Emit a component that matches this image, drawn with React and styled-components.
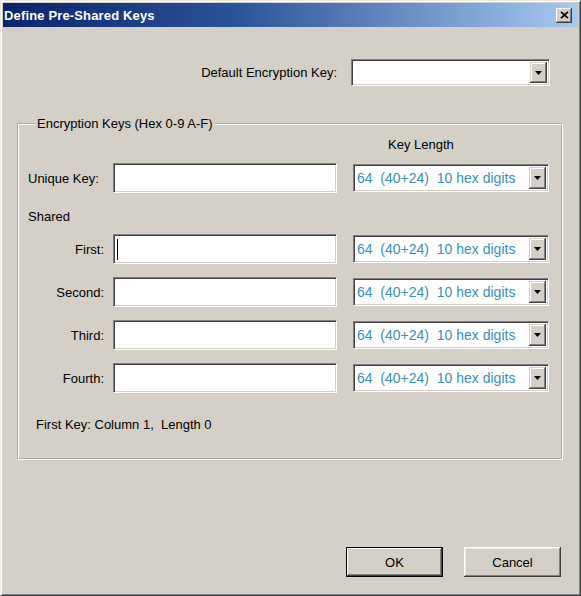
import React from 'react'
import styled, { createGlobalStyle } from 'styled-components'

const GlobalStyle = createGlobalStyle`
  html, body {
    margin: 0;
    padding: 0;
    background: #d4d0c8;
  }
  body {
    font-family: "Liberation Sans", Arial, sans-serif;
    font-size: 13px;
    color: #000;
  }
`

const Window = styled.div`
  width: 581px;
  height: 596px;
  box-sizing: border-box;
  display: flex;
  flex-direction: column;
  background: #d4d0c8;
  border: 1px solid;
  border-color: #ebe9e4 #404040 #404040 #ebe9e4;
  box-shadow: inset 1px 1px #fff, inset -1px -1px #808080;
  padding: 2px;
`

const TitleBar = styled.div`
  height: 24px;
  display: flex;
  align-items: center;
  padding: 0 6px 0 1px;
  background: linear-gradient(to right, #0a246a 0%, #2a5298 40%, #a6caf0 100%);
`

const Title = styled.span`
  color: #fff;
  font-weight: bold;
  font-size: 13px;
  letter-spacing: 0.15px;
`

const CloseButton = styled.div`
  margin-left: auto;
  width: 16px;
  height: 15px;
  display: flex;
  align-items: center;
  justify-content: center;
  background: #d4d0c8;
  box-shadow: inset -1px -1px #404040, inset 1px 1px #fff,
    inset -2px -2px #808080, inset 2px 2px #d4d0c8;
`

const Body = styled.div`
  flex: 1;
  display: flex;
  flex-direction: column;
  padding: 32px 15px 16px 14px;
`

const DefaultRow = styled.div`
  display: flex;
  justify-content: flex-end;
  align-items: center;
  gap: 14px;
  padding-right: 13px;
`

const Label = styled.span`
  width: ${p => (p.$width ? `${p.$width}px` : 'auto')};
  text-align: ${p => p.$align || 'right'};
  white-space: nowrap;
  line-height: 15px;
`

const Sunken = styled.div`
  box-sizing: border-box;
  background: #fff;
  border: 1px solid;
  border-color: #808080 #fff #fff #808080;
  box-shadow: inset 1px 1px #404040, inset -1px -1px #d4d0c8;
`

const TextField = styled(Sunken)`
  width: 224px;
  height: 30px;
  margin-left: 9px;
  display: flex;
  align-items: center;
  padding-left: 3px;
`

const Caret = styled.div`
  width: 1px;
  height: 21px;
  background: #000;
`

const Combo = styled(Sunken)`
  width: ${p => p.$width}px;
  height: ${p => p.$height}px;
  margin-left: ${p => p.$offset || 0}px;
  display: flex;
  align-items: stretch;
  padding: 2px;
`

const ComboValue = styled.div`
  flex: 1;
  display: flex;
  align-items: center;
  padding-left: 1px;
  color: #3a8fba;
  font-size: 14px;
  white-space: pre;
  overflow: hidden;
`

const DropButton = styled.div`
  width: 17px;
  display: flex;
  align-items: center;
  justify-content: center;
  background: #d4d0c8;
  box-shadow: inset -1px -1px #404040, inset 1px 1px #d4d0c8,
    inset -2px -2px #808080, inset 2px 2px #fff;
`

const Group = styled.fieldset`
  margin: 30px 0 0 0;
  padding: 0 10px 26px 9px;
  border: 2px groove #fff;
  min-width: 0;
`

const Legend = styled.legend`
  margin-left: 7px;
  padding: 0 2px;
  line-height: 15px;
`

const HeaderText = styled.div`
  margin: 6px 0 0 360px;
  line-height: 15px;
`

const Row = styled.div`
  display: flex;
  align-items: center;
  margin-top: ${p => p.$gap}px;
`

const Section = styled.div`
  margin-top: ${p => p.$gap}px;
  margin-left: ${p => p.$indent || 0}px;
  line-height: 15px;
  white-space: pre;
`

const ButtonRow = styled.div`
  margin-top: auto;
  display: flex;
  justify-content: flex-end;
  gap: 21px;
  padding-right: 2px;
`

const Button = styled.button`
  width: 97px;
  height: 30px;
  font-family: inherit;
  font-size: 13px;
  color: #000;
  background: #d4d0c8;
  border: ${p => (p.$default ? '1px solid #000' : '0')};
  box-shadow: ${p =>
    p.$default
      ? 'inset -1px -1px #404040, inset 1px 1px #fff, inset -2px -2px #808080'
      : 'inset -1px -1px #404040, inset 1px 1px #fff, inset -2px -2px #808080, inset 2px 2px #ebe9e4'};
  padding: 0;
`

const Arrow = () => (
  <svg width="7" height="4" viewBox="0 0 7 4">
    <path d="M0 0h7L3.5 4z" fill="#000" />
  </svg>
)

const CloseIcon = () => (
  <svg width="9" height="8" viewBox="0 0 9 8">
    <path d="M1 0.8l7 6.4M8 0.8l-7 6.4" stroke="#000" strokeWidth="1.8" />
  </svg>
)

const KEY_LENGTH = '64  (40+24)  10 hex digits'

function KeyLengthCombo() {
  return (
    <Combo $width={196} $height={28} $offset={16}>
      <ComboValue>{KEY_LENGTH}</ComboValue>
      <DropButton><Arrow /></DropButton>
    </Combo>
  )
}

function KeyRow({ label, gap, align, focused }) {
  return (
    <Row $gap={gap}>
      <Label $width={76} $align={align}>{label}</Label>
      <TextField>{focused && <Caret />}</TextField>
      <KeyLengthCombo />
    </Row>
  )
}

export default function App() {
  return (
    <>
      <GlobalStyle />
      <Window>
        <TitleBar>
          <Title>Define Pre-Shared Keys</Title>
          <CloseButton><CloseIcon /></CloseButton>
        </TitleBar>
        <Body>
          <DefaultRow>
            <Label>Default Encryption Key:</Label>
            <Combo $width={199} $height={27}>
              <ComboValue />
              <DropButton><Arrow /></DropButton>
            </Combo>
          </DefaultRow>

          <Group>
            <Legend>Encryption Keys (Hex 0-9 A-F)</Legend>
            <HeaderText>Key Length</HeaderText>
            <KeyRow label="Unique Key:" gap={11} align="left" />
            <Section $gap={16}>Shared</Section>
            <KeyRow label="First:" gap={10} focused />
            <KeyRow label="Second:" gap={13} />
            <KeyRow label="Third:" gap={13} />
            <KeyRow label="Fourth:" gap={13} />
            <Section $gap={24} $indent={8}>First Key: Column 1,  Length 0</Section>
          </Group>

          <ButtonRow>
            <Button $default>OK</Button>
            <Button>Cancel</Button>
          </ButtonRow>
        </Body>
      </Window>
    </>
  )
}
